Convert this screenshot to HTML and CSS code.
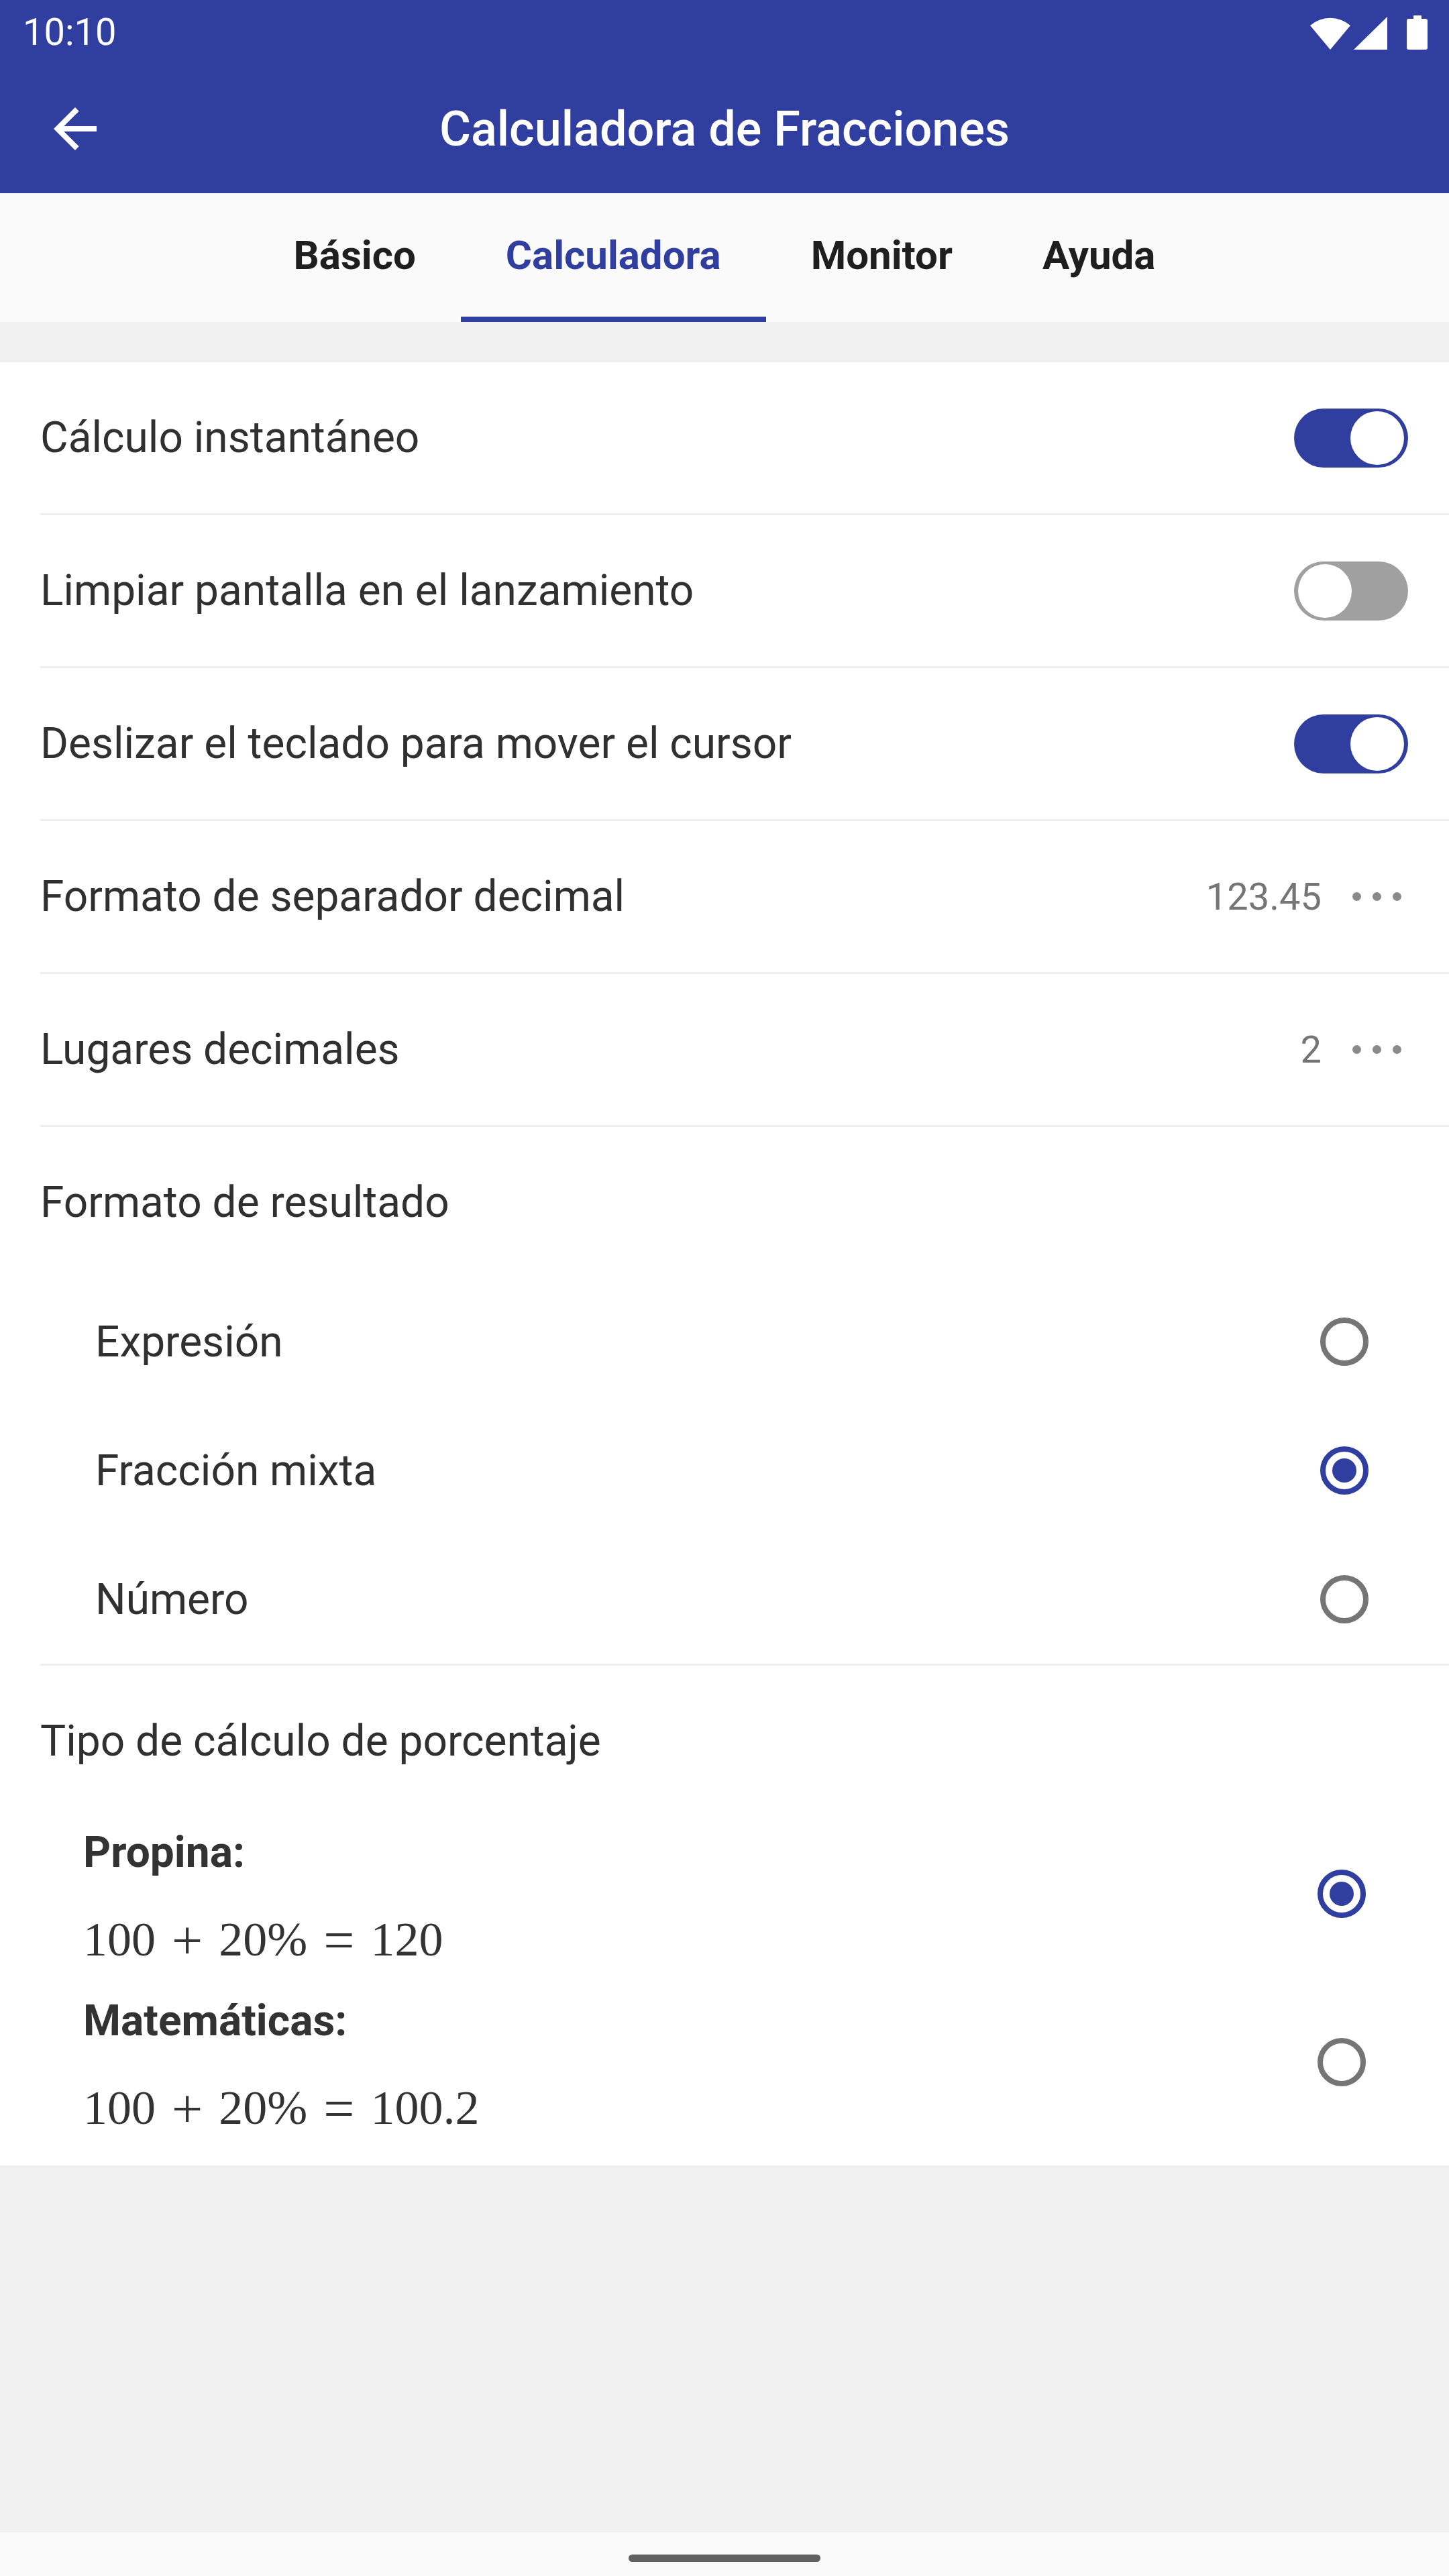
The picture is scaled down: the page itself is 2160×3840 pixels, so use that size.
FILE: index.html
```html
<!DOCTYPE html>
<html lang="es">
<head>
  <meta charset="UTF-8">
  <meta name="viewport" content="width=device-width, initial-scale=1.0">
  <title>Calculadora de Fracciones</title>
  <link rel="stylesheet" href="styles.css">
</head>
<body>
  <div class="status-bar">
    <span class="time">10:10</span>
    <div class="status-icons">
      <svg width="60" height="50" viewBox="0 0 60 50"><path d="M30 50 L0 14 A46 46 0 0 1 60 14 Z" fill="#fff"/></svg>
      <svg width="50" height="49" viewBox="0 0 50 49"><path d="M50 0 L50 49 L0 49 Z" fill="#fff"/></svg>
      <svg class="battery" width="31" height="51" viewBox="0 0 31 51"><rect x="10" y="0" width="12" height="6" rx="1" fill="#fff"/><rect x="0" y="5" width="31" height="46" rx="3" fill="#fff"/></svg>
    </div>
  </div>

  <header class="app-bar">
    <svg class="back" width="96" height="96" viewBox="0 0 24 24"><path d="M20 11H7.83l5.59-5.59L12 4l-8 8 8 8 1.41-1.41L7.83 13H20v-2z" fill="#fff"/></svg>
    <h1>Calculadora de Fracciones</h1>
  </header>

  <nav class="tabs">
    <div class="tab">Básico</div>
    <div class="tab active">Calculadora</div>
    <div class="tab">Monitor</div>
    <div class="tab">Ayuda</div>
  </nav>

  <div class="top-gap"></div>

  <main class="card">
    <div class="row">
      <span>Cálculo instantáneo</span>
      <span class="switch on"><span class="thumb"></span></span>
    </div>
    <div class="row">
      <span>Limpiar pantalla en el lanzamiento</span>
      <span class="switch"><span class="thumb"></span></span>
    </div>
    <div class="row">
      <span>Deslizar el teclado para mover el cursor</span>
      <span class="switch on"><span class="thumb"></span></span>
    </div>
    <div class="row">
      <span>Formato de separador decimal</span>
      <span class="setting">
        <span class="value">123.45</span>
        <span class="more"><i></i><i></i><i></i></span>
      </span>
    </div>
    <div class="row">
      <span>Lugares decimales</span>
      <span class="setting">
        <span class="value">2</span>
        <span class="more"><i></i><i></i><i></i></span>
      </span>
    </div>

    <div class="group">
      <div class="group-title">Formato de resultado</div>
      <div class="option">
        <span>Expresión</span>
        <span class="radio"></span>
      </div>
      <div class="option">
        <span>Fracción mixta</span>
        <span class="radio checked"></span>
      </div>
      <div class="option">
        <span>Número</span>
        <span class="radio"></span>
      </div>
    </div>

    <div class="group last">
      <div class="group-title">Tipo de cálculo de porcentaje</div>
      <div class="pct-item">
        <div class="pct-text">
          <div class="pct-label">Propina:</div>
          <div class="eq">100<span class="op">+</span>20%<span class="op">=</span>120</div>
        </div>
        <span class="radio checked"></span>
      </div>
      <div class="pct-item">
        <div class="pct-text">
          <div class="pct-label">Matemáticas:</div>
          <div class="eq">100<span class="op">+</span>20%<span class="op">=</span>100.2</div>
        </div>
        <span class="radio"></span>
      </div>
    </div>
  </main>

  <div class="filler"></div>

  <div class="nav-bar">
    <span class="handle"></span>
  </div>
</body>
</html>
```

FILE: styles.css
```css
* {
  margin: 0;
  padding: 0;
}

body {
  font-family: Roboto, "Noto Sans", Arial, sans-serif;
  background-color: #f0f0f0;
  min-height: 3840px;
  display: flex;
  flex-direction: column;
}

/* status bar + toolbar */
.status-bar {
  height: 96px;
  background-color: #303f9f;
  color: #fff;
  display: flex;
  align-items: center;
  justify-content: space-between;
  padding: 0 32px 0 34px;
}

.time {
  font-size: 56px;
}

.status-icons {
  display: flex;
  align-items: flex-end;
  gap: 5px;
}

.battery {
  margin-left: 24px;
}

.app-bar {
  height: 192px;
  background-color: #303f9f;
  display: grid;
  grid-template-columns: 1fr auto 1fr;
  align-items: center;
}

.back {
  margin-left: 64px;
}

.app-bar h1 {
  color: #fff;
  font-size: 72px;
  font-weight: 500;
}

/* tabs */
.tabs {
  height: 192px;
  background-color: #fafafa;
  display: flex;
  justify-content: center;
}

.tab {
  display: flex;
  align-items: center;
  padding: 0 67px;
  font-size: 60px;
  font-weight: 700;
  color: #1f1f1f;
  border-bottom: 8px solid transparent;
}

.tab.active {
  color: #303f9f;
  border-bottom-color: #303f9f;
}

.top-gap {
  height: 60px;
  background-color: #f0f0f0;
}

/* settings card */
.card {
  background-color: #fff;
  padding-bottom: 19px;
  color: #303030;
  font-size: 64px;
}

.row {
  height: 228px;
  box-sizing: border-box;
  margin-left: 60px;
  padding-right: 61px;
  border-bottom: 3px solid #eeeeee;
  display: flex;
  align-items: center;
  justify-content: space-between;
}

.switch {
  width: 170px;
  height: 88px;
  box-sizing: border-box;
  padding: 4px 6px;
  border-radius: 44px;
  background-color: #a0a0a0;
  display: flex;
  align-items: center;
}

.switch.on {
  background-color: #303f9f;
  justify-content: flex-end;
}

.thumb {
  width: 80px;
  height: 80px;
  border-radius: 50%;
  background-color: #fff;
}

.setting {
  display: flex;
  align-items: center;
}

.value {
  font-size: 56px;
  color: #757575;
}

.more {
  display: flex;
  gap: 17px;
  margin-left: 46px;
  margin-right: 10px;
}

.more i {
  width: 13px;
  height: 13px;
  border-radius: 50%;
  background-color: #8a8a8a;
}

.group {
  margin-left: 60px;
  border-bottom: 3px solid #eeeeee;
}

.group.last {
  border-bottom: none;
}

.group-title {
  height: 224px;
  display: flex;
  align-items: center;
}

.option {
  height: 192px;
  display: flex;
  align-items: center;
  justify-content: space-between;
  padding: 0 120px 0 82px;
}

.radio {
  width: 72px;
  height: 72px;
  box-sizing: border-box;
  border: 8px solid #757575;
  border-radius: 50%;
  display: flex;
  align-items: center;
  justify-content: center;
}

.radio.checked {
  border-color: #303f9f;
}

.radio.checked::after {
  content: "";
  width: 36px;
  height: 36px;
  border-radius: 50%;
  background-color: #303f9f;
}

.pct-item {
  display: flex;
  align-items: center;
  justify-content: space-between;
  padding: 17px 124px 17px 64px;
}

.pct-item .radio {
  margin-bottom: 19px;
}

.pct-label {
  font-weight: 700;
  line-height: 76px;
  color: #333;
}

.eq {
  margin-top: 41px;
  font-family: "Liberation Serif", "Times New Roman", serif;
  font-size: 72px;
  line-height: 100px;
  color: #333;
}

.op {
  font-size: 82px;
  line-height: 0;
  vertical-align: -5px;
  margin: 0 24px;
}

.filler {
  flex: 1;
}

.nav-bar {
  height: 65px;
  background-color: #f9f9f9;
  display: flex;
  justify-content: center;
  padding-top: 33px;
  box-sizing: border-box;
}

.handle {
  width: 286px;
  height: 11px;
  border-radius: 6px;
  background-color: #616161;
}
```
